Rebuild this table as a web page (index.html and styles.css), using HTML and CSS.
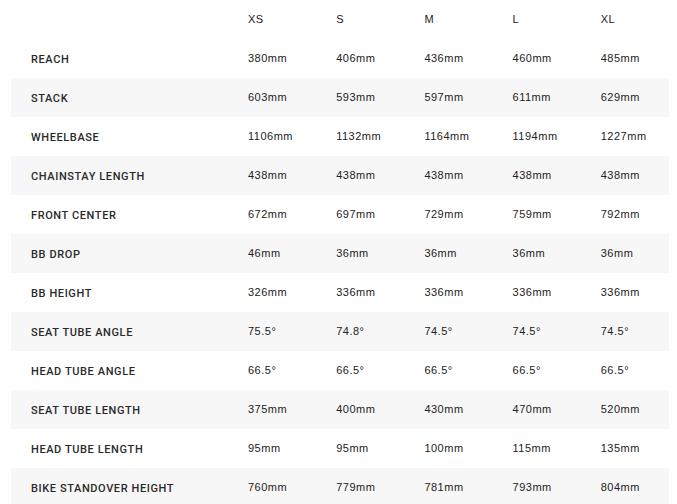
FILE: index.html
```html
<!DOCTYPE html>
<html>
<head>
<meta charset="utf-8">
<link rel="stylesheet" href="styles.css">
</head>
<body>
<table class="geo">
  <colgroup><col class="c-label"><col><col><col><col><col></colgroup>
  <thead>
    <tr><th></th><th>XS</th><th>S</th><th>M</th><th>L</th><th>XL</th></tr>
  </thead>
  <tbody>
    <tr><td class="label">REACH</td><td>380mm</td><td>406mm</td><td>436mm</td><td>460mm</td><td>485mm</td></tr>
    <tr><td class="label">STACK</td><td>603mm</td><td>593mm</td><td>597mm</td><td>611mm</td><td>629mm</td></tr>
    <tr><td class="label">WHEELBASE</td><td>1106mm</td><td>1132mm</td><td>1164mm</td><td>1194mm</td><td>1227mm</td></tr>
    <tr><td class="label">CHAINSTAY LENGTH</td><td>438mm</td><td>438mm</td><td>438mm</td><td>438mm</td><td>438mm</td></tr>
    <tr><td class="label">FRONT CENTER</td><td>672mm</td><td>697mm</td><td>729mm</td><td>759mm</td><td>792mm</td></tr>
    <tr><td class="label">BB DROP</td><td>46mm</td><td>36mm</td><td>36mm</td><td>36mm</td><td>36mm</td></tr>
    <tr><td class="label">BB HEIGHT</td><td>326mm</td><td>336mm</td><td>336mm</td><td>336mm</td><td>336mm</td></tr>
    <tr><td class="label">SEAT TUBE ANGLE</td><td>75.5°</td><td>74.8°</td><td>74.5°</td><td>74.5°</td><td>74.5°</td></tr>
    <tr><td class="label">HEAD TUBE ANGLE</td><td>66.5°</td><td>66.5°</td><td>66.5°</td><td>66.5°</td><td>66.5°</td></tr>
    <tr><td class="label">SEAT TUBE LENGTH</td><td>375mm</td><td>400mm</td><td>430mm</td><td>470mm</td><td>520mm</td></tr>
    <tr><td class="label">HEAD TUBE LENGTH</td><td>95mm</td><td>95mm</td><td>100mm</td><td>115mm</td><td>135mm</td></tr>
    <tr><td class="label">BIKE STANDOVER HEIGHT</td><td>760mm</td><td>779mm</td><td>781mm</td><td>793mm</td><td>804mm</td></tr>
  </tbody>
</table>
</body>
</html>
```
FILE: styles.css
```css
html, body {
  margin: 0;
  padding: 0;
  background: #fff;
}
body {
  padding: 0 8px 0 11px;
  font-family: "Liberation Sans", Arial, sans-serif;
  color: #222;
}
.geo {
  width: 658px;
  border-collapse: collapse;
  table-layout: fixed;
}
.c-label {
  width: 217px;
}
.geo tr {
  height: 39px;
}
.geo th,
.geo td {
  padding: 0 0 0 20px;
  font-size: 11px;
  line-height: 13px;
  font-weight: normal;
  letter-spacing: 0.5px;
  text-align: left;
  vertical-align: middle;
  white-space: nowrap;
}
.geo tbody tr:nth-child(even) {
  background: #f7f7f7;
}
.geo td.label {
  padding-top: 2px;
  font-family: Roboto, "Liberation Sans", sans-serif;
  font-size: 11px;
  font-weight: 500;
  letter-spacing: 0.6px;
  color: #2a2a2a;
}
```
